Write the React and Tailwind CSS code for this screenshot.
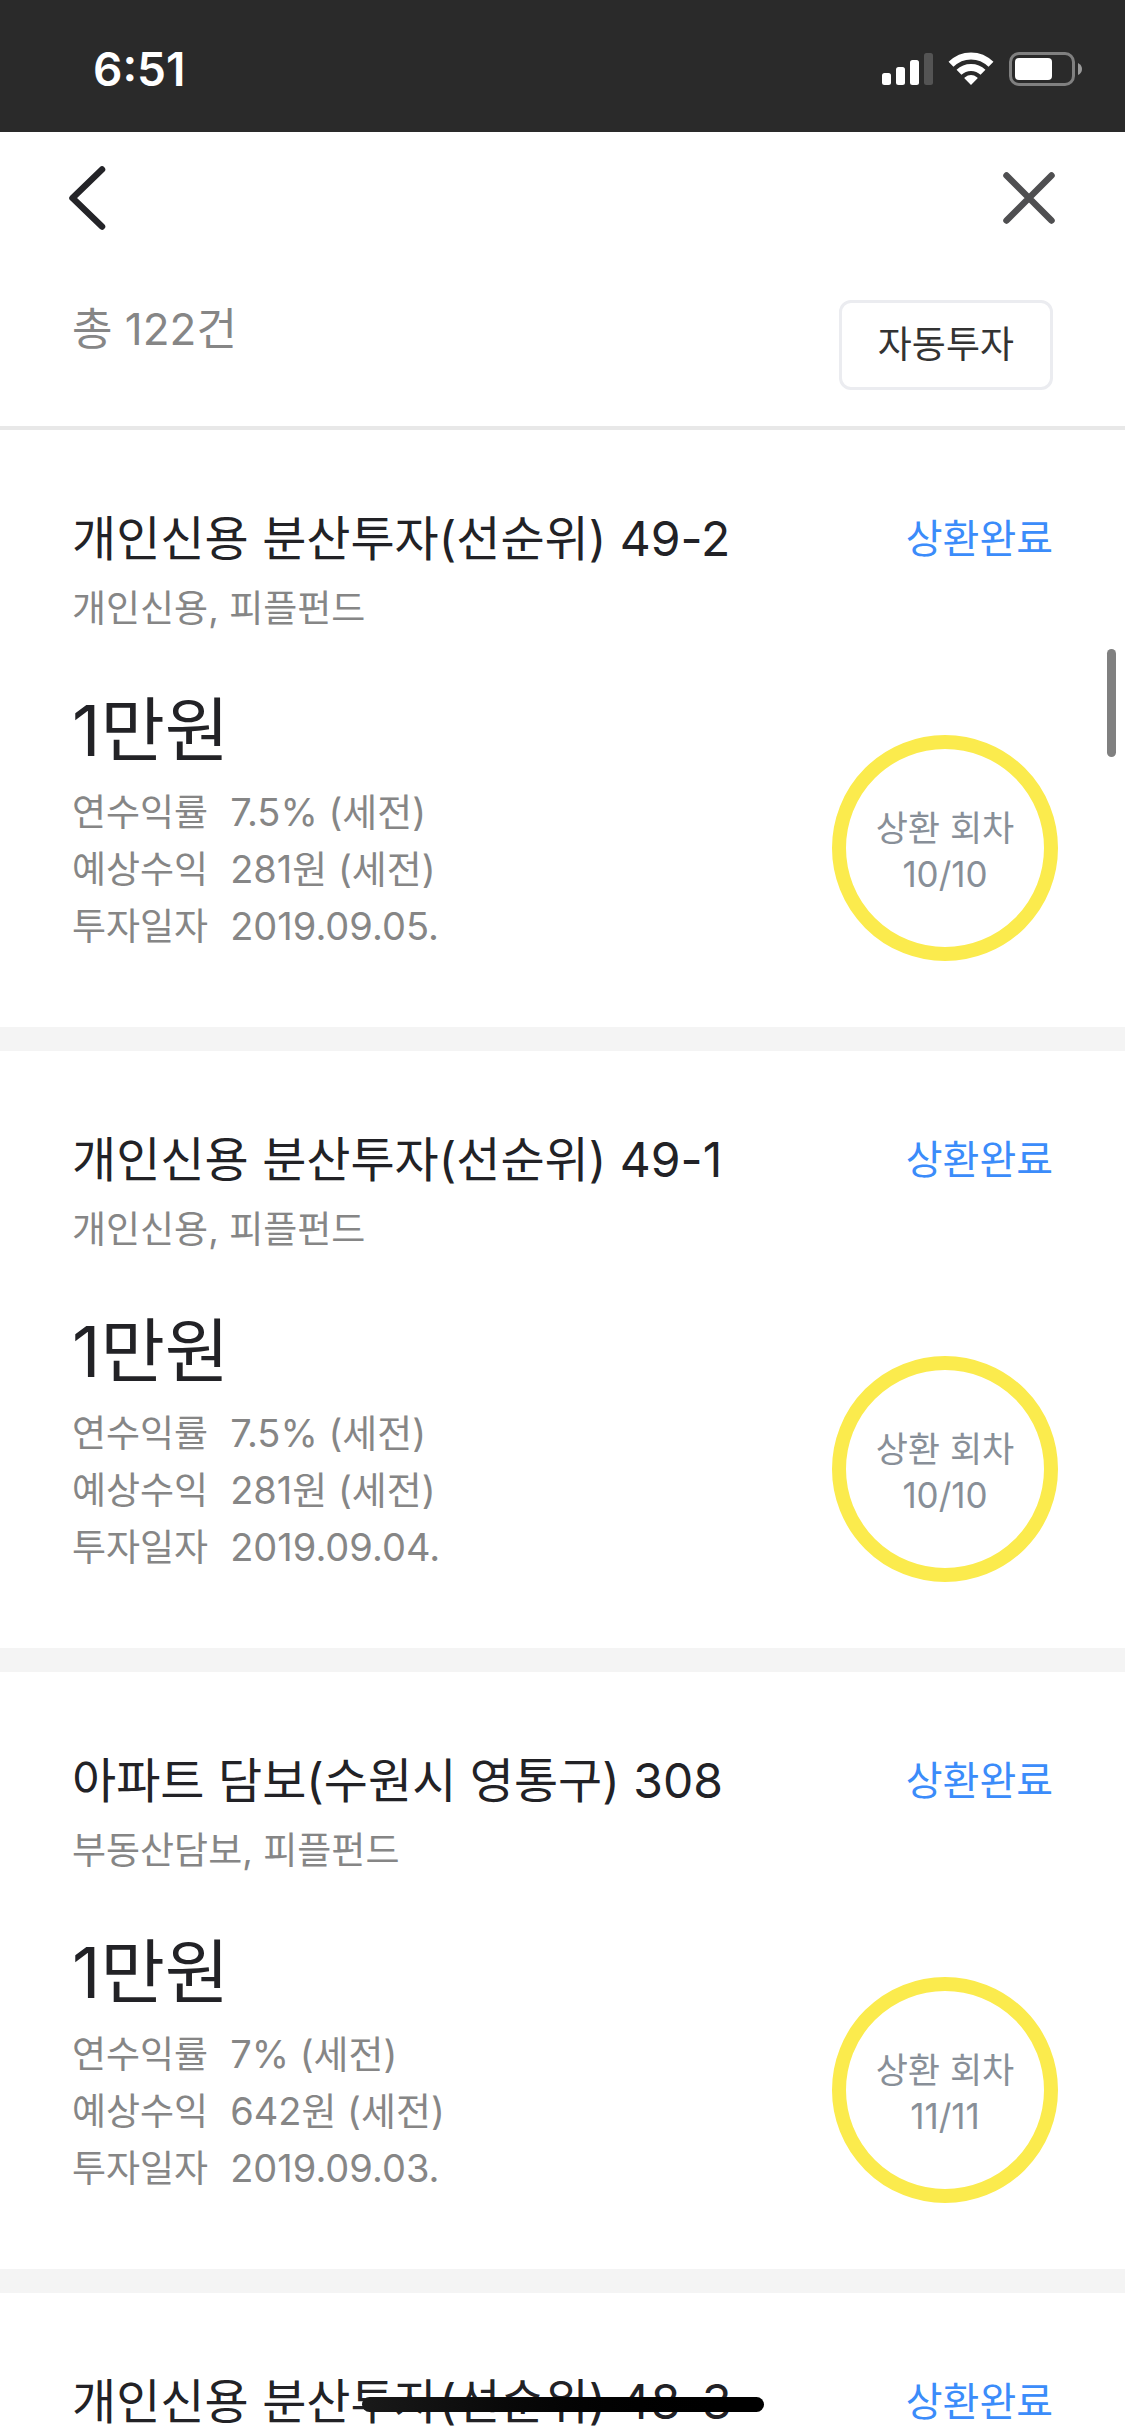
const investments = [
  {
    title: "개인신용 분산투자(선순위) 49-2",
    status: "상환완료",
    category: "개인신용, 피플펀드",
    amount: "1만원",
    details: [
      ["연수익률", "7.5% (세전)"],
      ["예상수익", "281원 (세전)"],
      ["투자일자", "2019.09.05."],
    ],
    round: "10/10",
  },
  {
    title: "개인신용 분산투자(선순위) 49-1",
    status: "상환완료",
    category: "개인신용, 피플펀드",
    amount: "1만원",
    details: [
      ["연수익률", "7.5% (세전)"],
      ["예상수익", "281원 (세전)"],
      ["투자일자", "2019.09.04."],
    ],
    round: "10/10",
  },
  {
    title: "아파트 담보(수원시 영통구) 308",
    status: "상환완료",
    category: "부동산담보, 피플펀드",
    amount: "1만원",
    details: [
      ["연수익률", "7% (세전)"],
      ["예상수익", "642원 (세전)"],
      ["투자일자", "2019.09.03."],
    ],
    round: "11/11",
  },
  { title: "개인신용 분산투자(선순위) 48-3", status: "상환완료" },
];

function StatusIcons() {
  return (
    <svg width="200" height="34" viewBox="0 0 200 34" fill="none" aria-hidden="true">
      <g fill="#fff">
        <rect x="0" y="21" width="9" height="12" rx="2.5" />
        <rect x="14" y="15" width="9" height="18" rx="2.5" />
        <rect x="28" y="8" width="9" height="25" rx="2.5" />
        <rect x="42" y="1" width="9" height="32" rx="2.5" fill="#545454" />
        <path d="M89 33 L82.6 26.6 Q82 26 82.7 25.4 Q89 20.6 95.3 25.4 Q96 26 95.4 26.6 Z" />
      </g>
      <g stroke="#fff" strokeWidth="7">
        <path d="M69 12.3 Q77.5 3.9 89 3.9 Q100.5 3.9 109 12.3" />
        <path d="M77 20.3 Q82 15.4 89 15.4 Q96 15.4 101 20.3" />
      </g>
      <rect x="128.5" y="1.5" width="63" height="31" rx="8.5" stroke="#808080" strokeWidth="3" />
      <rect x="133" y="6" width="37" height="22" rx="4" fill="#fff" />
      <path d="M196 11 Q200 13 200 17 Q200 21 196 23 Z" fill="#9a9a9a" />
    </svg>
  );
}

function StatusBar() {
  return (
    <header className="flex h-[132px] shrink-0 items-center justify-between bg-[#2a2a2a] pt-1.5 pr-[43px] pl-[93px]">
      <time className="text-[46px] leading-[60px] font-semibold text-white">6:51</time>
      <StatusIcons />
    </header>
  );
}

function Toolbar() {
  return (
    <nav className="flex h-[132px] shrink-0 items-center justify-between pr-[66px] pl-[65px]">
      <button type="button" aria-label="뒤로">
        <svg width="44" height="76" viewBox="0 0 44 76" fill="none">
          <path d="M37 9.5 L7.5 38 L37 66.5" stroke="#242428" strokeWidth="6.5" strokeLinecap="round" strokeLinejoin="round" />
        </svg>
      </button>
      <button type="button" aria-label="닫기">
        <svg width="60" height="60" viewBox="0 0 60 60" fill="none">
          <path d="M7.5 7.5 L52.5 52.5 M52.5 7.5 L7.5 52.5" stroke="#4f4f51" strokeWidth="6.5" strokeLinecap="round" />
        </svg>
      </button>
    </nav>
  );
}

function Summary() {
  return (
    <div className="flex shrink-0 items-start justify-between border-b-4 border-[#e8e8e8] px-[72px] py-9">
      <p className="text-[44px] leading-[58px] text-[#868686]">총 122건</p>
      <button
        type="button"
        className="h-[90px] rounded-[12px] border-3 border-[#ebecf0] px-9 text-[37px] leading-[54px] text-[#333]"
      >
        자동투자
      </button>
    </div>
  );
}

function RoundBadge({ value }) {
  return (
    <div className="-mr-[5px] flex size-[226px] shrink-0 flex-col items-center justify-center rounded-full border-14 border-[#fbeb4d] pt-1.5 text-[35px] leading-[46px] text-[#888f98]">
      <span>상환 회차</span>
      <span>{value}</span>
    </div>
  );
}

function Investment({ item }) {
  return (
    <li className="border-b-24 border-[#f4f4f4] px-[72px] pt-[72px] pb-[66px] last:border-b-0">
      <div className="flex items-center justify-between">
        <h2 className="text-[48px] leading-[74px] text-[#222226]">{item.title}</h2>
        <span className="text-[40px] leading-[74px] text-[#3b8cfa]">{item.status}</span>
      </div>
      {item.details && (
        <>
          <p className="text-[37px] leading-[66px] text-[#868686]">{item.category}</p>
          <div className="flex items-end justify-between pt-9">
            <div className="pb-1.5">
              <p className="text-[70px] leading-[106px] text-[#222226]">{item.amount}</p>
              <dl className="grid grid-cols-[auto_auto] gap-x-[22px] leading-[57px] text-[#868686]">
                {item.details.map(([label, value]) => (
                  <div key={label} className="contents">
                    <dt className="text-[37px]">{label}</dt>
                    <dd className="text-[38px]">{value}</dd>
                  </div>
                ))}
              </dl>
            </div>
            <RoundBadge value={item.round} />
          </div>
        </>
      )}
    </li>
  );
}

export default function App() {
  return (
    <div className="relative flex h-screen flex-col overflow-hidden bg-white font-['Inter','Noto_Sans_CJK_KR',sans-serif]">
      <StatusBar />
      <Toolbar />
      <Summary />
      <main className="min-h-0 flex-1 overflow-hidden">
        <ul>
          {investments.map((item) => (
            <Investment key={item.title} item={item} />
          ))}
        </ul>
      </main>
      <div className="absolute top-[649px] right-[9px] h-[108px] w-[9px] rounded-full bg-[#808080]" />
      <div className="absolute bottom-6 left-1/2 h-[15px] w-[402px] -translate-x-1/2 rounded-full bg-linear-to-r from-[#1a1a1a] to-black" />
    </div>
  );
}
